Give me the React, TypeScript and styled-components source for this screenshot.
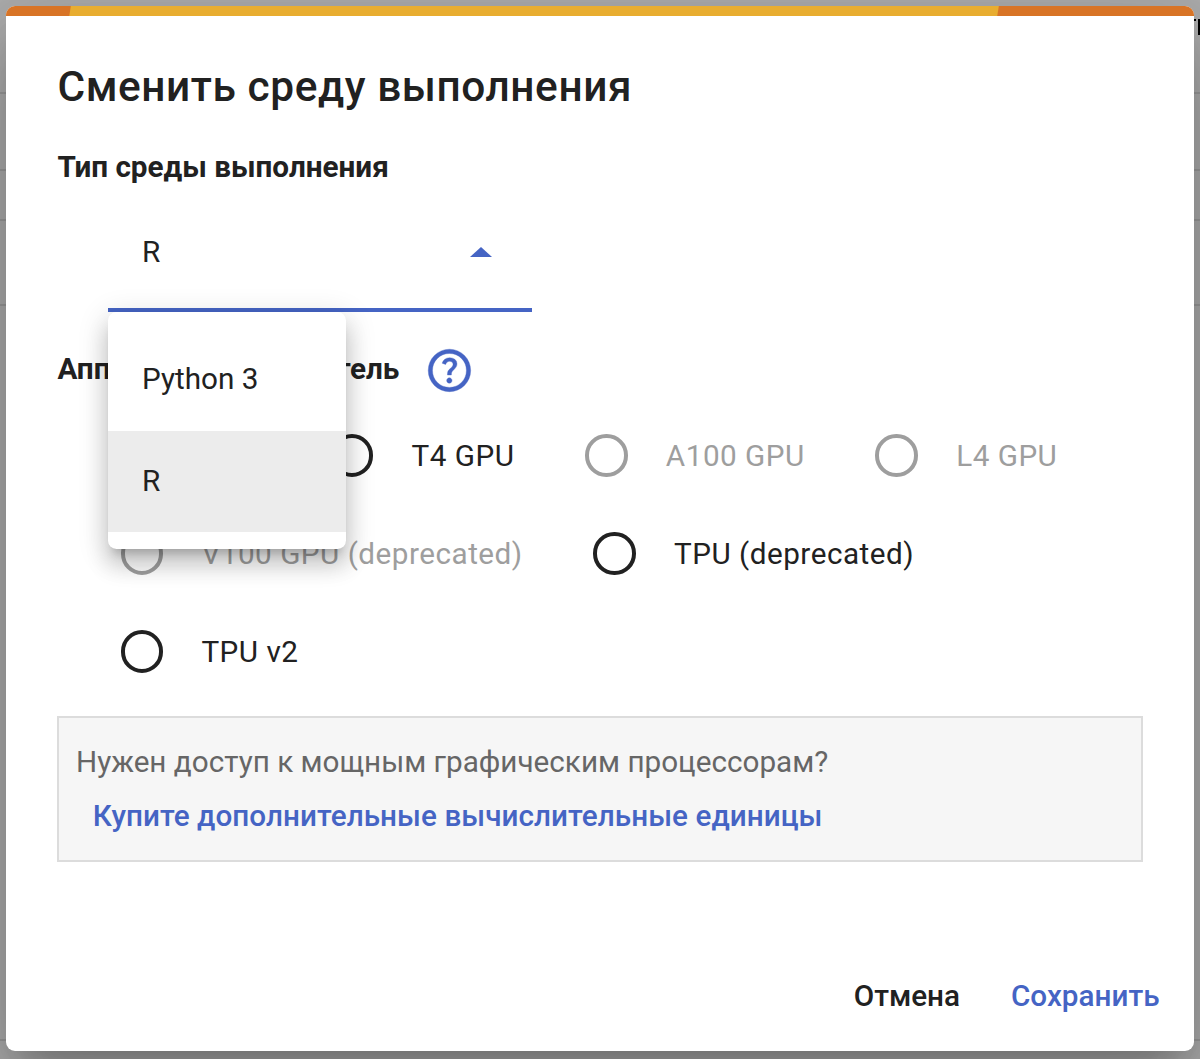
import React from "react";
import styled, { createGlobalStyle } from "styled-components";

const INK = "#212121";
const BLUE = "#4564c4";

const GlobalStyle = createGlobalStyle`
  * { box-sizing: border-box; }
  body { margin: 0; background: #adadad; overflow: hidden; }
`;

const Page = styled.main`
  position: relative;
  height: 1059px;
  width: 1200px;
  overflow: hidden;
  padding: 5.5px 6.5px 8px 6.4px;
  background: #adadad;
  font-family: Roboto, "Noto Sans", sans-serif;
  font-size: 29.68px;
  line-height: 40px;
  color: ${INK};
`;

const Backdrop = styled.div`
  position: absolute;
  inset: 0;
  display: flex;
  flex-direction: column;
`;

const Cell = styled.div<{ $h: number }>`
  flex: none;
  height: ${(p) => p.$h}px;
  border-bottom: 2px solid #9a9a9a;
`;

const Sliver = styled.div`
  position: absolute;
  top: 19px;
  right: 0;
  width: 6px;
  height: 16px;
  display: flex;
  justify-content: space-between;
`;

const Stem = styled.span<{ $h: number }>`
  width: 2px;
  height: ${(p) => p.$h}px;
  background: #000;
`;

const Dialog = styled.section`
  position: relative;
  display: flex;
  flex-direction: column;
  height: 1045.5px;
  border-radius: 9px;
  background: #fff;
  box-shadow: 0 23px 32px -15px rgba(0, 0, 0, 0.2), 0 50px 80px 6px rgba(0, 0, 0, 0.14),
    0 19px 97px 17px rgba(0, 0, 0, 0.12);
`;

const Stripe = styled.div`
  flex: none;
  height: 10.5px;
  border-radius: 9px 9px 0 0;
  overflow: hidden;
  background: #d87426;
  padding: 0 195.5px 0 63.6px;
`;

const StripeFill = styled.div`
  height: 100%;
  background: #e8ad30;
  transform: skewX(-9deg);
`;

const Body = styled.div`
  flex: 1;
  display: flex;
  flex-direction: column;
  padding: 45.5px 50.5px 0 51px;
`;

const Title = styled.h1`
  margin: 0 0 35px;
  font-size: 42.4px;
  font-weight: 500;
  line-height: 50px;
  letter-spacing: 0.57px;
`;

const Label = styled.h2`
  margin: 0;
  font-size: 29.68px;
  font-weight: 700;
  line-height: 40px;
`;

const Select = styled.div`
  position: relative;
  width: 424px;
  height: 118px;
  margin: 7px 0 0 50.6px;
  padding: 2px 40px 0 34px;
  display: flex;
  align-items: center;
  justify-content: space-between;
  border-bottom: 4px solid ${BLUE};
`;

const Caret = styled.span`
  border: 11px solid transparent;
  border-top: 0;
  border-bottom: 10.5px solid ${BLUE};
`;

const Menu = styled.ul`
  position: absolute;
  z-index: 2;
  top: 118px;
  left: 0;
  width: 237.8px;
  margin: 0;
  padding: 17px 0;
  list-style: none;
  background: #fff;
  border-radius: 8.5px;
  box-shadow: 0 10px 10px -6px rgba(0, 0, 0, 0.2), 0 17px 21px 2px rgba(0, 0, 0, 0.14),
    0 6px 29px 4px rgba(0, 0, 0, 0.12);
`;

const MenuItem = styled.li<{ $selected?: boolean }>`
  display: flex;
  align-items: center;
  height: ${(p) => (p.$selected ? 101 : 102)}px;
  padding-left: 34px;
  padding-bottom: ${(p) => (p.$selected ? 0 : 2)}px;
  background: ${(p) => (p.$selected ? "#ececec" : "transparent")};
`;

const LabelRow = styled.div`
  display: flex;
  align-items: center;
  height: 50px;
  margin-top: 34px;
  gap: 24.6px;
`;

const AcceleratorLabel = styled(Label)`
  padding-bottom: 3px;
`;

const Radios = styled.div`
  display: flex;
  flex-direction: column;
  margin: 11px 0 0 63.2px;
`;

const RadioRow = styled.div`
  display: flex;
  align-items: center;
  height: 98px;
  gap: 70.6px;
`;

const Radio = styled.label<{ $disabled?: boolean }>`
  display: flex;
  align-items: center;
  gap: 38.3px;
  letter-spacing: 0.5px;
  white-space: nowrap;
  color: ${(p) => (p.$disabled ? "#9e9e9e" : INK)};
`;

const Ring = styled.span`
  flex: none;
  width: 42.5px;
  height: 42.5px;
  border: 4.2px solid currentColor;
  border-radius: 50%;
`;

const Notice = styled.div`
  display: flex;
  flex-direction: column;
  gap: 14px;
  height: 146px;
  margin-top: 15px;
  padding: 24px 0 0 16.6px;
  border: 2px solid #dcdcdc;
  background: #f6f6f6;
  color: #666;
`;

const NoticeLink = styled.a`
  margin-left: 16.8px;
  color: ${BLUE};
  font-weight: 500;
  letter-spacing: 0.05px;
`;

const Actions = styled.footer`
  display: flex;
  justify-content: flex-end;
  gap: 51px;
  padding: 0 34px 35px 0;
`;

const Action = styled.button<{ $primary?: boolean }>`
  padding: 0;
  border: 0;
  background: none;
  font: inherit;
  font-weight: 500;
  color: ${(p) => (p.$primary ? BLUE : INK)};
`;

const rows = [
  [{ name: "CPU" }, { name: "T4 GPU" }, { name: "A100 GPU", off: true }, { name: "L4 GPU", off: true }],
  [{ name: "V100 GPU (deprecated)", off: true }, { name: "TPU (deprecated)" }],
  [{ name: "TPU v2" }],
] as { name: string; off?: boolean }[][];

const HelpIcon = () => (
  <svg width="50.9" height="50.9" viewBox="0 -960 960 960" fill={BLUE} stroke={BLUE} strokeWidth="7">
    <path d="M478-240q21 0 35.5-14.5T528-290q0-21-14.5-35.5T478-340q-21 0-35.5 14.5T428-290q0 21 14.5 35.5T478-240Zm-36-154h74q0-33 7.5-52t42.5-52q26-26 41-49.5t15-56.5q0-56-41-86t-97-30q-57 0-92.5 30T342-618l66 26q5-18 22.5-39t53.5-21q32 0 48 17.5t16 38.5q0 20-12 37.5T506-526q-44 39-54 59t-10 73Zm38 314q-83 0-156-31.5T197-197q-54-54-85.5-127T80-480q0-83 31.5-156T197-763q54-54 127-85.5T480-880q83 0 156 31.5T763-763q54 54 85.5 127T880-480q0 83-31.5 156T763-197q-54 54-127 85.5T480-80Zm0-80q134 0 227-93t93-227q0-134-93-227t-227-93q-134 0-227 93t-93 227q0 134 93 227t227 93Z" />
  </svg>
);

export default function App() {
  return (
    <Page>
      <GlobalStyle />
      <Backdrop>
        {[94, 77, 50, 85, 735].map((h, i) => (
          <Cell key={i} $h={h} />
        ))}
        <Sliver>
          <Stem $h={2} />
          <Stem $h={16} />
        </Sliver>
      </Backdrop>
      <Dialog>
        <Stripe>
          <StripeFill />
        </Stripe>
        <Body>
          <Title>Сменить среду выполнения</Title>
          <Label>Тип среды выполнения</Label>
          <Select>
            <span>R</span>
            <Caret />
            <Menu>
              <MenuItem>Python 3</MenuItem>
              <MenuItem $selected>R</MenuItem>
            </Menu>
          </Select>
          <LabelRow>
            <AcceleratorLabel>Аппаратный ускоритель</AcceleratorLabel>
            <HelpIcon />
          </LabelRow>
          <Radios>
            {rows.map((row, i) => (
              <RadioRow key={i}>
                {row.map((r) => (
                  <Radio key={r.name} $disabled={r.off}>
                    <Ring />
                    {r.name}
                  </Radio>
                ))}
              </RadioRow>
            ))}
          </Radios>
          <Notice>
            <span>Нужен доступ к мощным графическим процессорам?</span>
            <NoticeLink>Купите дополнительные вычислительные единицы</NoticeLink>
          </Notice>
        </Body>
        <Actions>
          <Action>Отмена</Action>
          <Action $primary>Сохранить</Action>
        </Actions>
      </Dialog>
    </Page>
  );
}
